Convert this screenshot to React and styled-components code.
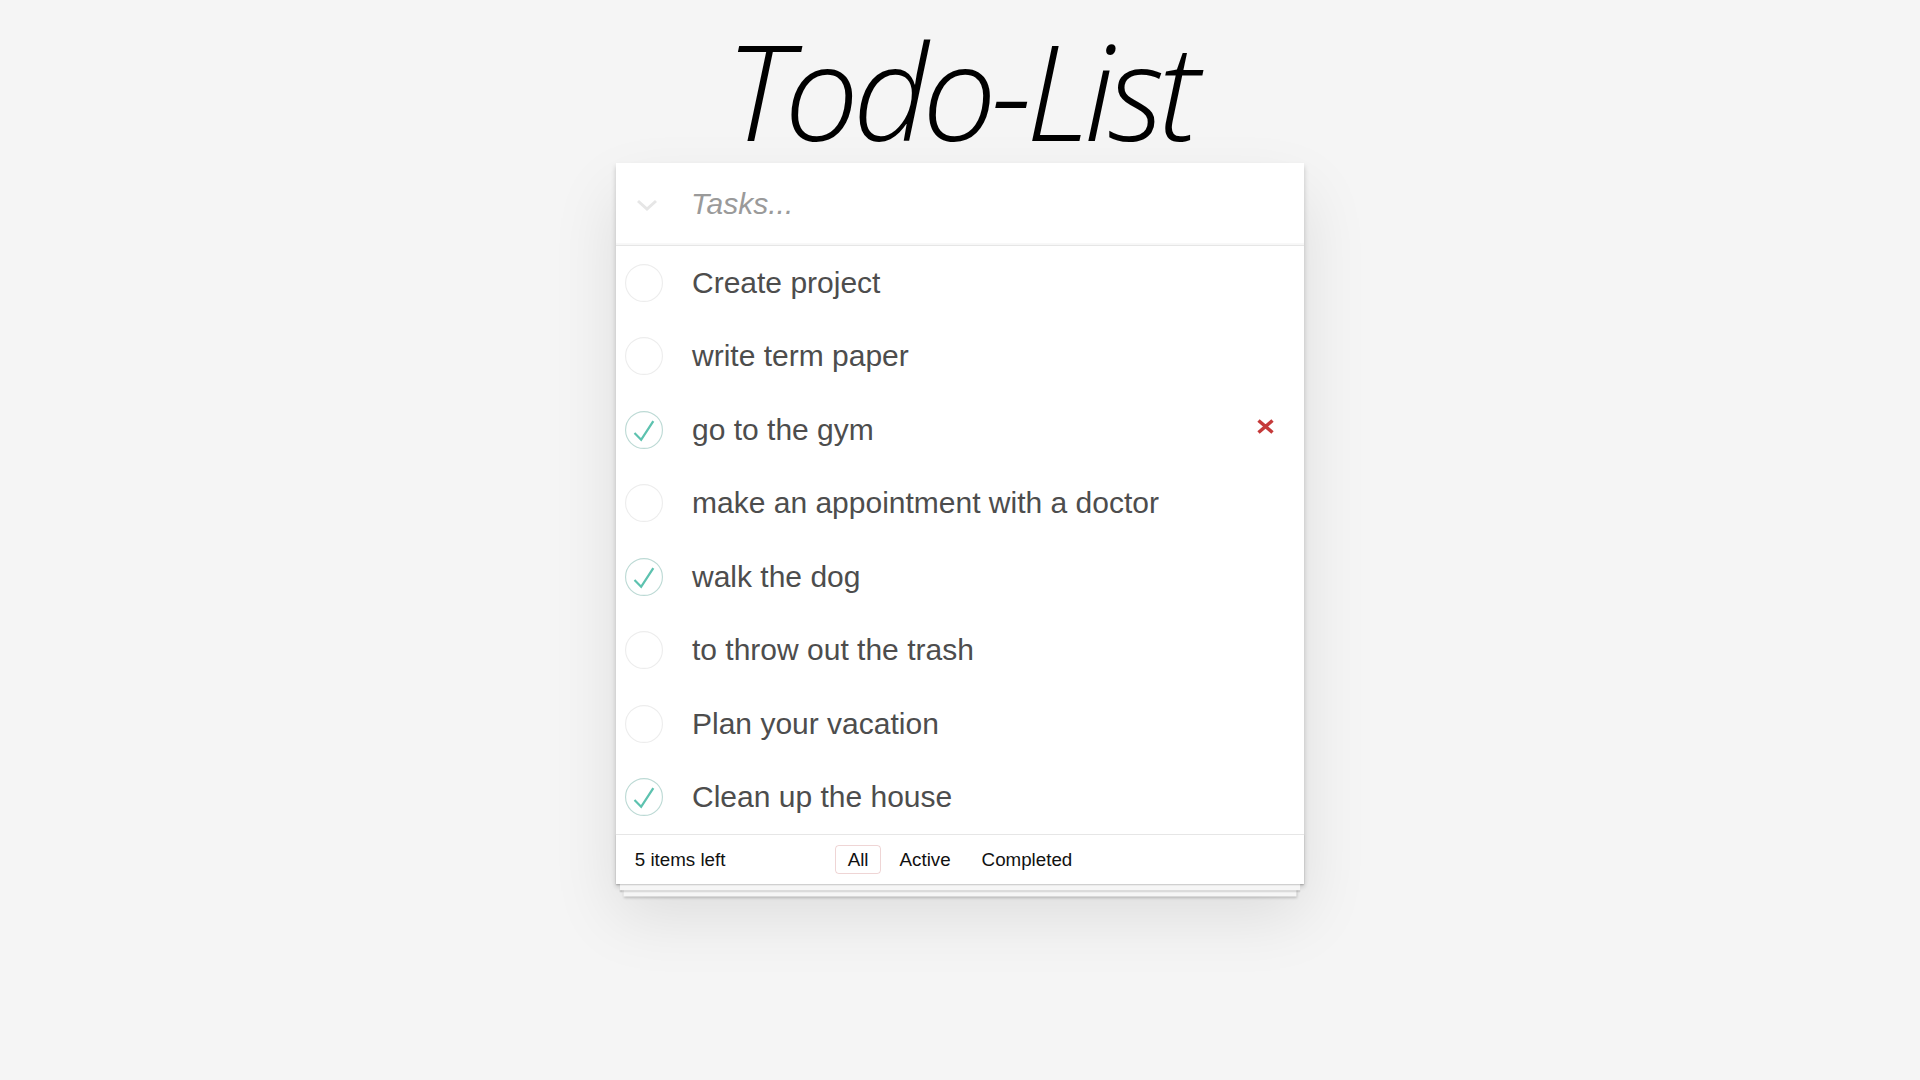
import React from 'react';
import styled, { createGlobalStyle } from 'styled-components';

const GlobalStyle = createGlobalStyle`
  html, body {
    margin: 0;
    padding: 0;
    background: #f5f5f5;
    font-family: 'Liberation Sans', Arial, sans-serif;
    color: #4d4d4d;
  }
`;

const Page = styled.section`
  display: flex;
  flex-direction: column;
  align-items: center;
  min-height: 1080px;
`;

const Title = styled.h1`
  margin: 0 0 -17px;
  padding: 0 20px;
  line-height: normal;
  font-family: 'Open Sans', 'Noto Sans', sans-serif;
  font-size: 132px;
  font-weight: 300;
  font-style: italic;
  color: #000;
  letter-spacing: -6px;
`;

const Card = styled.div`
  position: relative;
  width: 688px;
  background: #fff;
  box-shadow: 0 2.5px 5px 0 rgba(0, 0, 0, 0.2), 0 31px 62px 0 rgba(0, 0, 0, 0.1);
`;

const Header = styled.header`
  display: flex;
  align-items: center;
  height: 82px;
  border-bottom: 1px solid #e6e6e6;
  box-shadow: inset 0 -2px 1px rgba(0, 0, 0, 0.03);
`;

const ToggleAll = styled.div`
  width: 75px;
  display: flex;
  justify-content: center;
  padding-top: 2px;
  margin-left: -7px;
`;

const Placeholder = styled.span`
  font-size: 30px;
  font-style: italic;
  color: #9a9a9a;
  margin-left: 7px;
`;

const List = styled.ul`
  list-style: none;
  margin: 0;
  padding: 0;
`;

const Row = styled.li`
  display: flex;
  align-items: center;
  height: 73.5px;
  padding: 0 30px 0 9px;
`;

const Circle = styled.svg`
  width: 38px;
  height: 38px;
  flex: none;
`;

const Label = styled.span`
  flex: 1;
  margin-left: 29px;
  font-size: 30px;
  line-height: 36px;
  color: #4d4d4d;
`;

const Destroy = styled.svg`
  width: 17px;
  height: 15px;
  margin-top: -6px;
`;

const Footer = styled.footer`
  display: grid;
  grid-template-columns: 1fr auto 1fr;
  align-items: center;
  height: 49px;
  padding: 0 18.75px;
  border-top: 1px solid #e6e6e6;
  font-size: 18.75px;
  color: #111;
  box-shadow: 0 1.25px 1.25px rgba(0, 0, 0, 0.2), 0 10px 0 -3.75px #f6f6f6,
    0 11.25px 1.25px -3.75px rgba(0, 0, 0, 0.2), 0 20px 0 -7.5px #f6f6f6,
    0 21.25px 2.5px -7.5px rgba(0, 0, 0, 0.2);
`;

const Filters = styled.div`
  display: flex;
`;

const Filter = styled.span`
  margin: 3px;
  padding: 3.75px 11.5px;
  line-height: 20px;
  border: 1.25px solid ${(p) => (p.$selected ? 'rgba(175, 47, 47, 0.2)' : 'transparent')};
  border-radius: 3.75px;
`;

const todos = [
  { text: 'Create project', done: false },
  { text: 'write term paper', done: false },
  { text: 'go to the gym', done: true, hovered: true },
  { text: 'make an appointment with a doctor', done: false },
  { text: 'walk the dog', done: true },
  { text: 'to throw out the trash', done: false },
  { text: 'Plan your vacation', done: false },
  { text: 'Clean up the house', done: true },
];

const Check = ({ done }) => (
  <Circle viewBox="0 0 100 100">
    <circle cx="50" cy="50" r="48.5" fill="none" stroke={done ? '#bddad5' : '#ededed'} strokeWidth="3" />
    {done && <path fill="#5dc2af" d="M72 25L42 71 27 56l-4 4 20 20 34-52z" />}
  </Circle>
);

const App = () => {
  const left = todos.filter((t) => !t.done).length;

  return (
    <>
      <GlobalStyle />
      <Page>
        <Title>Todo-List</Title>
        <Card>
          <Header>
            <ToggleAll>
              <svg width="22" height="12" viewBox="0 0 22 12">
                <path d="M2 2 L11 10 L20 2" fill="none" stroke="#e6e6e6" strokeWidth="3" />
              </svg>
            </ToggleAll>
            <Placeholder>Tasks...</Placeholder>
          </Header>
          <List>
            {todos.map((t) => (
              <Row key={t.text}>
                <Check done={t.done} />
                <Label>{t.text}</Label>
                {t.hovered && (
                  <Destroy viewBox="0 0 17 15">
                    <path d="M1.5 1.5 L15.5 13.5 M15.5 1.5 L1.5 13.5" stroke="#c53a3a" strokeWidth="3.5" />
                  </Destroy>
                )}
              </Row>
            ))}
          </List>
          <Footer>
            <span>{left} items left</span>
            <Filters>
              <Filter $selected>All</Filter>
              <Filter>Active</Filter>
              <Filter>Completed</Filter>
            </Filters>
            <span />
          </Footer>
        </Card>
      </Page>
    </>
  );
};

export default App;
